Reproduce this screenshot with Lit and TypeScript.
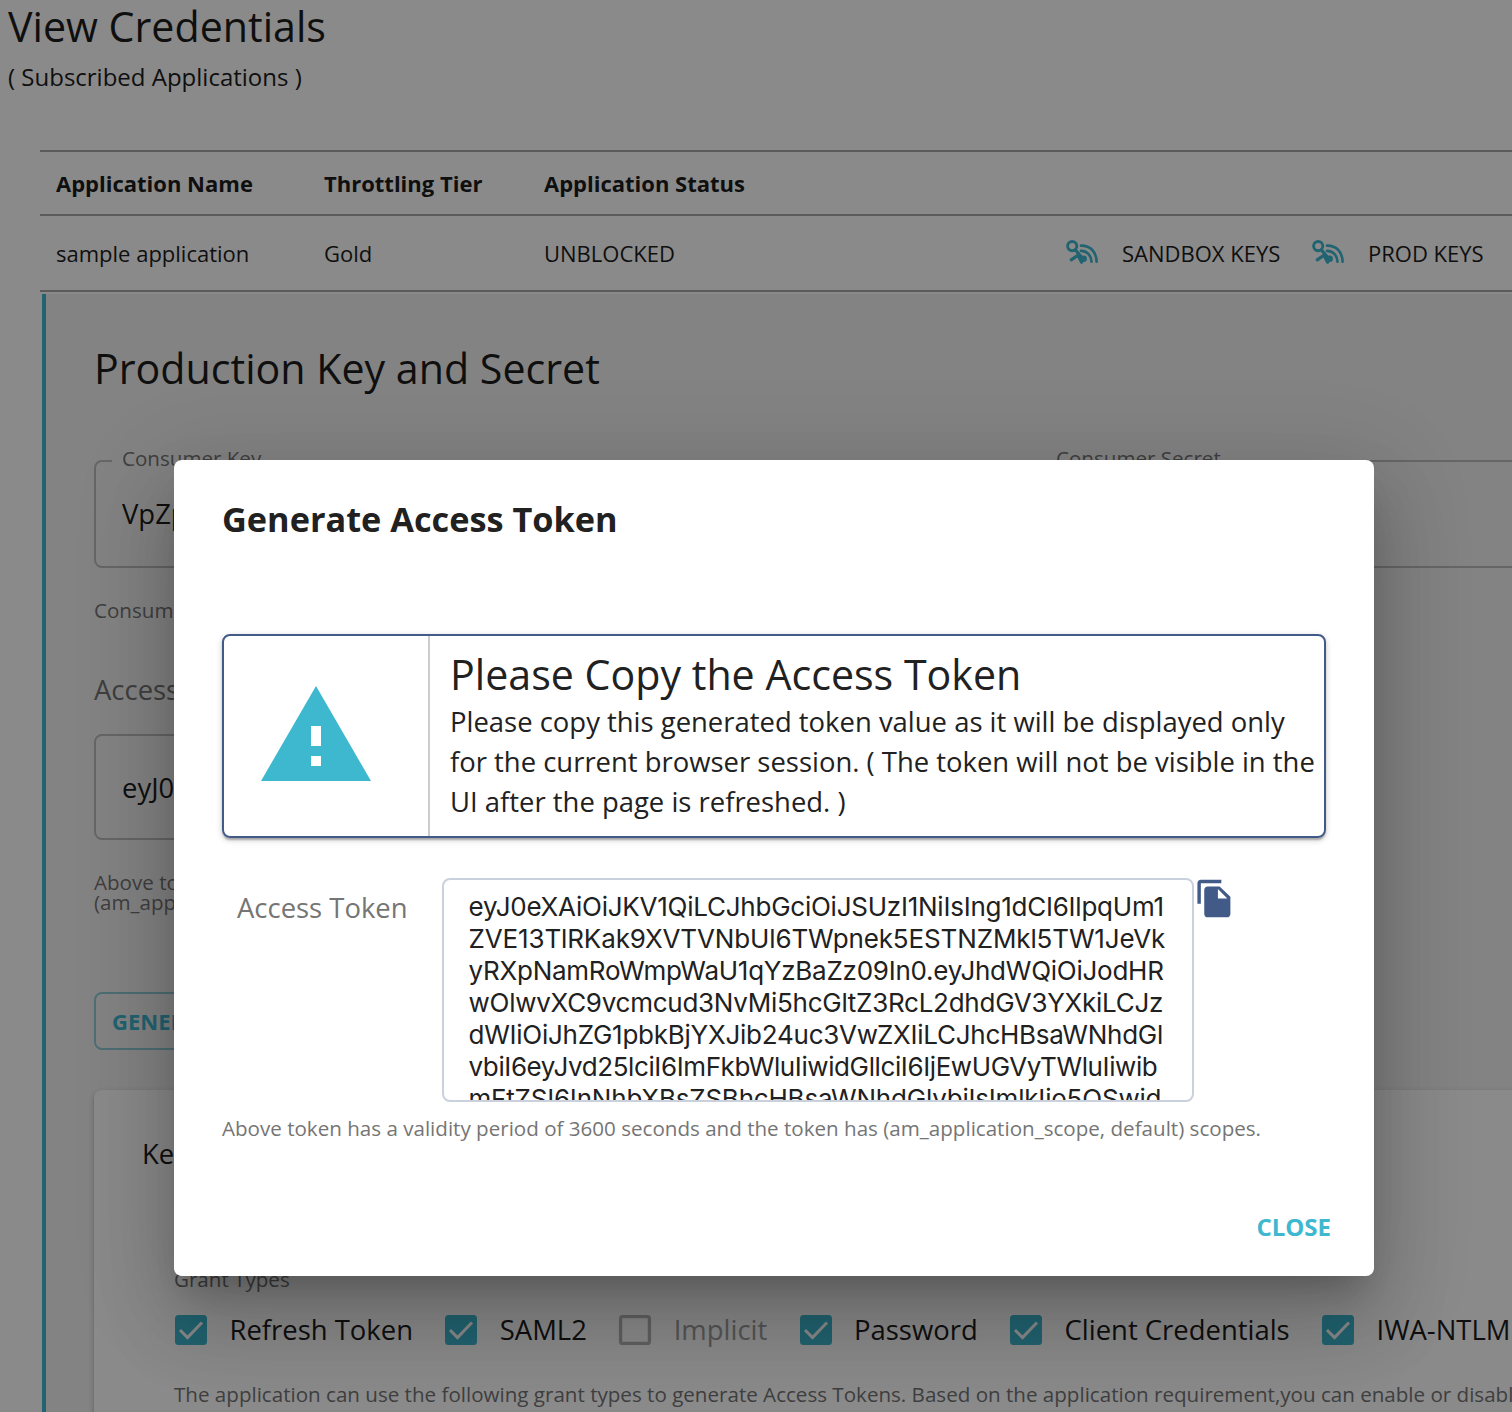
import { LitElement, html, css, svg } from "lit";
import { customElement, property } from "lit/decorators.js";

interface Grant {
  label: string;
  checked: boolean;
}

const GRANTS: Grant[] = [
  { label: "Refresh Token", checked: true },
  { label: "SAML2", checked: true },
  { label: "Implicit", checked: false },
  { label: "Password", checked: true },
  { label: "Client Credentials", checked: true },
  { label: "IWA-NTLM", checked: true },
];

// Each line of the token with its tracking in pixels.
const TOKEN_LINES: [string, number][] = [
  ["eyJ0eXAiOiJKV1QiLCJhbGciOiJSUzI1NiIsIng1dCI6IlpqUm1", -0.24],
  ["ZVE13TlRKak9XVTVNbUl6TWpnek5ESTNZMkl5TW1JeVk", -0.13],
  ["yRXpNamRoWmpWaU1qYzBaZz09In0.eyJhdWQiOiJodHR", -0.25],
  ["wOlwvXC9vcmcud3NvMi5hcGltZ3RcL2dhdGV3YXkiLCJz", -0.26],
  ["dWIiOiJhZG1pbkBjYXJib24uc3VwZXIiLCJhcHBsaWNhdGl", -0.25],
  ["vbiI6eyJvd25lciI6ImFkbWluIiwidGllciI6IjEwUGVyTWluIiwib", -0.39],
  ["mFtZSI6InNhbXBsZSBhcHBsaWNhdGlvbiIsImlkIjo5OSwid", -0.2],
];

const keyIcon = html`<svg class="key-icon" width="32" height="26" viewBox="0 0 32 26" fill="none" stroke="#3db8cf" stroke-width="2.9" stroke-linecap="round" stroke-linejoin="round">
  <circle cx="6.2" cy="6.1" r="4.6"></circle>
  <path stroke-width="3.2" d="M9.500 10 17.500 19.500M5.300 19.900l6.200-4.400M13 17l2.600 5.200"></path>
  <path stroke-width="2.600" d="M15 5.600C24 5.400 30.300 11.500 30.600 21.600M15 10.900c6 0 10.200 4.300 10.500 10.700"></path>
  <circle cx="17.700" cy="18.700" r="1.800" fill="#3db8cf"></circle>
</svg>`;

@customElement("grant-option")
export class GrantOption extends LitElement {
  @property() label = "";
  @property({ type: Boolean }) checked = false;

  static styles = css`
    :host { display: flex; flex: none; align-items: center; gap: 21.500px; font-size: 27.450px; line-height: 40px; color: #1c1c1c; white-space: nowrap; }
    .off { color: #9e9e9e; }
    svg { display: block; }
  `;

  render() {
    return html`
      <svg width="34" height="32" viewBox="0 0 34 32">
        ${this.checked
          ? svg`<rect x="1" y="1" width="32" height="30" rx="3.500" fill="#3db8cf"></rect><path d="M6 16l7.500 7.500L28 8.500" fill="none" stroke="#fff" stroke-width="3"></path>`
          : svg`<rect x="2.600" y="2.600" width="28.800" height="26.800" rx="2" fill="none" stroke="#b4b4b4" stroke-width="3.300"></rect>`}
      </svg>
      <span class=${this.checked ? "on" : "off"}>${this.label}</span>
    `;
  }
}

@customElement("app-root")
export class AppRoot extends LitElement {
  static styles = css`
    :host { display: block; position: relative; width: 1512px; height: 1412px; overflow: hidden; background: #fff; color: #1c1c1c; font-family: "Open Sans", sans-serif; white-space: nowrap; }
    * { box-sizing: border-box; }
    h1, h2, p { margin: 0; font-weight: 400; }
    .page { display: flex; flex-direction: column; height: 1412px; overflow: hidden; }
    .title { padding-left: 8px; font-size: 41.160px; line-height: 52px; }
    .subtitle { padding: 8px 0 0 8px; font-size: 24px; line-height: 34px; }
    .table { margin: 56px 0 0 40px; border-top: 2px solid #a8a8a8; font-size: 22px; line-height: 30px; }
    .row { display: grid; grid-template-columns: 268px 220px 522px 246px 200px; align-items: center; padding-left: 16px; border-bottom: 2px solid #a8a8a8; height: 76px; }
    .head { height: 64px; font-weight: 700; }
    .keys { display: flex; align-items: center; gap: 24px; }
    .key-icon { display: block; }
    .panel { flex: none; margin: 2px 0 0 42px; border-left: 4px solid #3db8cf; background: #f3f3f3; padding: 48px 0 0 48px; }
    .h { font-size: 41.160px; line-height: 52px; }
    .fields { display: flex; gap: 28px; margin-top: 57px; width: 1900px; }
    fieldset { margin: 0; border: 2px solid #bdbdbd; border-radius: 8px; padding: 0 26px; min-width: 0; }
    .half { width: 906px; height: 117px; padding-top: 23px; }
    legend { padding: 0 10px 5px; margin-left: -10px; font-size: 20.580px; line-height: 15px; color: #757575; }
    .val { font-size: 27.450px; line-height: 40px; }
    .hint { font-size: 20.580px; line-height: 20px; color: #757575; }
    .key-hint { margin-top: 32px; }
    .label { font-size: 27.450px; line-height: 40px; color: #757575; }
    .token-label { margin-top: 50px; }
    .tokenbox { margin-top: 24px; width: 1200px; height: 106px; padding-top: 32px; }
    .scope-hint { margin-top: 32px; }
    .gen { margin-top: 80px; border: 2px solid #8fcbd6; border-radius: 8px; width: 400px; height: 58px; padding-left: 16px; line-height: 54px; font-size: 22px; font-weight: 700; color: #3db8cf; }
    .card { margin-top: 40px; width: 1700px; height: 500px; background: #fff; border-radius: 8px; padding: 44px 0 0 48px; box-shadow: 0 2px 6px rgba(0,0,0,.2), 0 2px 2px rgba(0,0,0,.14), 0 4px 2px -2px rgba(0,0,0,.12); }
    .grants { margin: 95px 0 0 32px; }
    .options { display: flex; gap: 31.300px; margin: 21px 0 34px; }

    .backdrop { position: absolute; inset: 0; background: rgba(0,0,0,.46); }
    .dialog { position: absolute; left: 174px; top: 460px; width: 1200px; height: 816px; background: #fff; border-radius: 8px; padding: 34px 48px 0; color: #212121; box-shadow: 0 22px 30px -14px rgba(0,0,0,.2), 0 48px 76px 6px rgba(0,0,0,.14), 0 18px 92px 16px rgba(0,0,0,.12); }
    .dtitle { font-size: 34.300px; line-height: 50px; font-weight: 700; }
    .notice { margin-top: 90px; height: 204px; border: 2px solid #415a88; border-radius: 8px; display: flex; box-shadow: 0 2px 6px rgba(0,0,0,.2), 0 2px 2px rgba(0,0,0,.14), 0 4px 2px -2px rgba(0,0,0,.12); }
    .warn { flex: none; width: 206px; padding: 40px 0 0 32px; border-right: 2px solid #ccc; }
    .warn svg { display: block; }
    .msg { padding: 10px 0 0 20px; }
    .msg h2 { font-size: 41.160px; line-height: 56px; }
    .msg p { font-size: 27.450px; line-height: 40px; }
    .tokenrow { display: flex; align-items: flex-start; margin-top: 40px; height: 224px; }
    .tokenrow .label { width: 220px; padding: 10px 0 0 15px; }
    .area { width: 752px; height: 224px; border: 2px solid #cbd1dc; border-radius: 8px; padding: 11px 0 0 24.500px; overflow: hidden; font: 400 26px/32px Inter, "Liberation Sans", sans-serif; color: #212121; }
    .copy { display: block; }
    .validity { margin-top: 16px; font-size: 20.580px; line-height: 20px; color: #757575; }
    .actions { display: flex; justify-content: flex-end; margin: 72px -5px 0 0; }
    .close { border: 0; background: none; padding: 0; font: 700 24px/34px "Open Sans", sans-serif; color: #3db8cf; }
  `;

  render() {
    return html`
      <main class="page">
        <h1 class="title">View Credentials</h1>
        <p class="subtitle">( Subscribed Applications )</p>
        <section class="table">
          <div class="row head"><span>Application Name</span><span>Throttling Tier</span><span>Application Status</span></div>
          <div class="row">
            <span>sample application</span><span>Gold</span><span>UNBLOCKED</span>
            <span class="keys">${keyIcon}SANDBOX KEYS</span>
            <span class="keys">${keyIcon}PROD KEYS</span>
          </div>
        </section>
        <section class="panel">
          <h2 class="h">Production Key and Secret</h2>
          <div class="fields">
            <fieldset class="half"><legend>Consumer Key</legend><div class="val">VpZp</div></fieldset>
            <fieldset class="half"><legend>Consumer Secret</legend></fieldset>
          </div>
          <p class="hint key-hint">Consumer</p>
          <p class="label token-label">Access</p>
          <fieldset class="tokenbox"><div class="val">eyJ0</div></fieldset>
          <p class="hint scope-hint">Above token<br />(am_application_scope</p>
          <div class="gen">GENERATE</div>
          <div class="card">
            <p class="val">Key</p>
            <div class="grants">
              <p class="hint">Grant Types</p>
              <div class="options">
                ${GRANTS.map((g) => html`<grant-option .label=${g.label} .checked=${g.checked}></grant-option>`)}
              </div>
              <p class="hint">The application can use the following grant types to generate Access Tokens. Based on the application requirement,you can enable or disable</p>
            </div>
          </div>
        </section>
      </main>
      <div class="backdrop"></div>
      <div class="dialog" role="dialog">
        <h2 class="dtitle">Generate Access Token</h2>
        <div class="notice">
          <div class="warn">
            <svg width="120" height="120" viewBox="0 0 24 24" fill="#3db8cf"><path d="M1 21h22L12 2 1 21zm12-3h-2v-2h2v2zm0-4h-2v-4h2v4z"></path></svg>
          </div>
          <div class="msg">
            <h2>Please Copy the Access Token</h2>
            <p>Please copy this generated token value as it will be displayed only<br />for the current browser session. ( The token will not be visible in the<br />UI after the page is refreshed. )</p>
          </div>
        </div>
        <div class="tokenrow">
          <span class="label">Access Token</span>
          <div class="area">
            ${TOKEN_LINES.map(([line, spacing]) => html`<div style="letter-spacing:${spacing}px">${line}</div>`)}
          </div>
          <svg class="copy" width="41" height="41" viewBox="0 0 24 24" fill="#415a88"><path d="M16 1H4c-1.100 0-2 .9-2 2v12h2V3h12V1zm-1 4l6.300 6v10c0 1.100-.9 2-2 2H8c-1.100 0-2-.9-2-2V7c0-1.100.9-2 2-2h7zm-1 7h5.500L14 6.500V12z"></path></svg>
        </div>
        <p class="validity">Above token has a validity period of 3600 seconds and the token has (am_application_scope, default) scopes.</p>
        <div class="actions"><button class="close">CLOSE</button></div>
      </div>
    `;
  }
}
